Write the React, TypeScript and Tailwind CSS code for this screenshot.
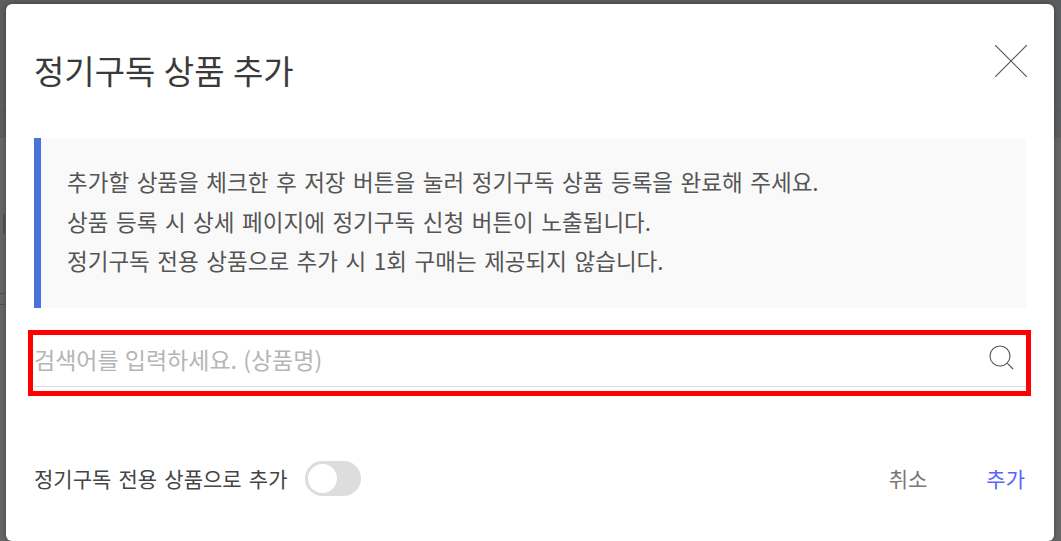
const font = { fontFamily: '"Noto Sans CJK KR", "Noto Sans", sans-serif' }

export default function App() {
  return (
    <div style={font} className="relative h-[541px] w-[1061px] overflow-hidden bg-[#666666] pl-[6px] pr-[7px] pt-[4px]">
      {/* page behind the dim layer */}
      <div className="absolute inset-x-0 top-0 h-[138px] border-b border-[#606060] bg-[#5b5d5f]">
        <div className="mt-[105px] h-px bg-[#636363]" />
      </div>
      <div className="absolute left-[3px] top-[214px] h-[20px] w-[2px] bg-[#5a5048]" />
      <div className="absolute left-0 top-[293px] h-[12px] w-[5px] border-y border-[#505050]" />

      {/* modal */}
      <div className="relative h-[537px] rounded-[6px] bg-white px-[28px] pt-[40px] shadow-[0_0_5px_rgba(0,0,0,0.35)]">
        <div className="flex h-[54px] items-start justify-between">
          <h2 className="text-[33px] leading-[52px] font-normal text-[#3a3a3a] [word-spacing:1px]">정기구독 상품 추가</h2>
          <button className="-mr-[1px] mt-[1px]">
            <svg width="32" height="32" viewBox="0 0 32 32" fill="none" stroke="#555555" strokeWidth="1.2">
              <path d="M0 0L32 32M32 0L0 32" />
            </svg>
          </button>
        </div>

        <div className="mt-[40px] h-[170px] border-l-[7px] border-[#4a72dc] bg-[#f9f9f9] pl-[26px] pt-[24px] text-[22.5px] leading-[39.5px] text-[#555555] [word-spacing:2.5px]">
          <p>추가할 상품을 체크한 후 저장 버튼을 눌러 정기구독 상품 등록을 완료해 주세요.</p>
          <p>상품 등록 시 상세 페이지에 정기구독 신청 버튼이 노출됩니다.</p>
          <p>정기구독 전용 상품으로 추가 시 1회 구매는 제공되지 않습니다.</p>
        </div>

        {/* search field with the red highlight */}
        <div className="-ml-[6px] -mr-[5px] mt-[22px] h-[66px] border-[5px] border-[#ff0000] pb-[4px] pl-[1px]">
          <div className="flex h-[52px] items-center justify-between border-b border-[#dddddd] pr-[11px]">
            <span className="-mt-[2px] text-[23px] text-[#b5b5b5] [word-spacing:1px]">검색어를 입력하세요. (상품명)</span>
            <svg className="mb-[6px]" width="26" height="26" viewBox="0 0 26 26" fill="none" stroke="#555555" strokeWidth="1.1">
              <circle cx="11" cy="11" r="10" />
              <path d="M18.2 18.2L24 24" />
            </svg>
          </div>
        </div>

        {/* footer */}
        <div className="mt-[65px] flex h-[35px] items-center justify-between">
          <div className="flex items-center gap-[18px]">
            <span className="text-[21px] text-[#444444] [word-spacing:2.5px]">정기구독 전용 상품으로 추가</span>
            <div className="flex h-[35px] w-[56px] items-center rounded-full bg-[#dddddd] pl-[3px]">
              <div className="h-[29px] w-[29px] rounded-full bg-white" />
            </div>
          </div>
          <div className="flex items-center gap-[59px] pr-[1px] text-[21px]">
            <button className="text-[#777777]">취소</button>
            <button className="text-[#5566ff]">추가</button>
          </div>
        </div>
      </div>
    </div>
  )
}
